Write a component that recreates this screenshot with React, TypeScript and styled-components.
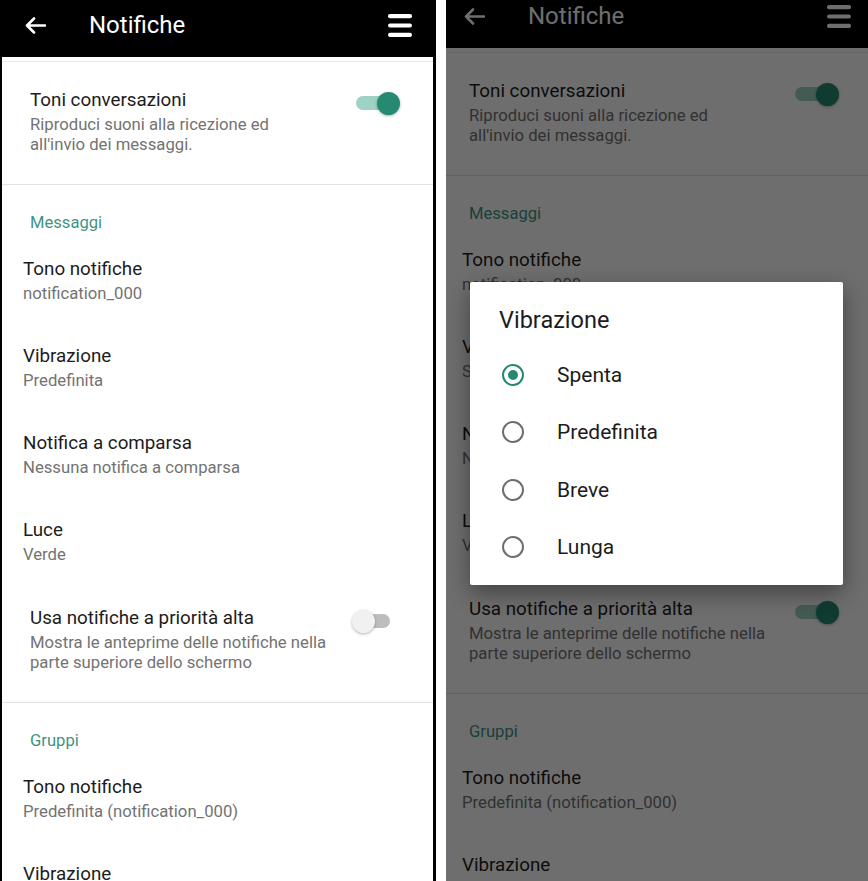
import React from "react";
import styled, { createGlobalStyle } from "styled-components";

const Global = createGlobalStyle`
  html, body { margin: 0; padding: 0; background: #fff; }
  body { font-family: Roboto, "Noto Sans", "Liberation Sans", sans-serif; }
  * { box-sizing: border-box; }
`;

const TEAL = "#268a72";

const Page = styled.div`
  display: flex;
  width: 868px;
  height: 881px;
  overflow: hidden;
  background: #fff;
`;

const FramedPanel = styled.div`
  flex: none;
  width: 436px;
  height: 881px;
  border-left: 2px solid #000;
  border-right: 3px solid #000;
  overflow: hidden;
`;

const CroppedPanel = styled.div`
  flex: none;
  position: relative;
  width: 422px;
  height: 881px;
  margin-left: 10px;
  overflow: hidden;
`;

const ScreenShift = styled.div`
  margin: -9px 0 0 -5px;
`;

const ScreenRoot = styled.div`
  width: 431px;
  background: #fff;
`;

const AppBar = styled.header`
  height: 57px;
  background: #000;
  color: #fff;
  display: flex;
  align-items: center;
  padding: 0 21px 7px 23px;
`;

const BarTitle = styled.h1`
  flex: 1;
  margin: 0 0 0 43px;
  font-size: 24px;
  font-weight: 400;
  line-height: 28px;
`;

const Shade = styled.div`
  height: 5px;
  border-bottom: 1px solid #ececec;
`;

const ToggleRow = styled.div<{ $top: number }>`
  display: flex;
  align-items: flex-start;
  padding: ${(p) => p.$top}px 33px 29px 28px;
`;

const TextCol = styled.div`
  flex: 1;
  min-width: 0;
`;

const ItemTitle = styled.div`
  font-size: 18.8px;
  line-height: 24px;
  color: #1c1c1c;
  white-space: nowrap;
`;

const Summary = styled.div`
  margin-top: 3px;
  font-size: 16.7px;
  line-height: 20px;
  color: #737373;
  white-space: nowrap;
`;

const Divider = styled.div`
  height: 1px;
  background: #e2e2e2;
`;

const SectionHeader = styled.div`
  padding: 28px 0 4px 28px;
  font-size: 16.6px;
  line-height: 20px;
  color: #3f9482;
`;

const Item = styled.div`
  padding: 20px 0 20px 21px;
`;

const SwitchBox = styled.div`
  flex: none;
  position: relative;
  width: 48px;
  height: 24px;
  margin-top: 3px;
`;

const Track = styled.span<{ $on: boolean }>`
  position: absolute;
  left: 4px;
  top: 5px;
  width: 34px;
  height: 14px;
  border-radius: 7px;
  background: ${(p) => (p.$on ? "#9ed2c4" : "#bdbdbd")};
`;

const Thumb = styled.span<{ $on: boolean }>`
  position: absolute;
  top: 0.5px;
  left: ${(p) => (p.$on ? "25px" : "0")};
  width: 23px;
  height: 23px;
  border-radius: 50%;
  background: ${(p) => (p.$on ? TEAL : "#f1f1f1")};
  box-shadow: 0 1px 3px rgba(0, 0, 0, 0.3);
`;

const Dim = styled.div`
  position: absolute;
  inset: 0;
  background: rgba(0, 0, 0, 0.57);
`;

const Dialog = styled.div`
  position: absolute;
  left: 24px;
  top: 282px;
  width: 373px;
  height: 303px;
  background: #fff;
  border-radius: 2px;
  box-shadow: 0 8px 22px rgba(0, 0, 0, 0.4);
  padding-top: 24px;
`;

const DialogTitle = styled.h2`
  margin: 0 0 12px 29px;
  font-size: 23.5px;
  font-weight: 400;
  line-height: 28px;
  color: #1c1c1c;
`;

const Option = styled.div`
  height: 57.5px;
  display: flex;
  align-items: center;
  gap: 33px;
  padding-left: 32px;
  font-size: 21px;
  color: #1c1c1c;
`;

const Radio = styled.span<{ $checked: boolean }>`
  flex: none;
  width: 22px;
  height: 22px;
  border-radius: 50%;
  border: 2px solid ${(p) => (p.$checked ? TEAL : "#6e6e6e")};
  display: flex;
  align-items: center;
  justify-content: center;
  &::after {
    content: "";
    width: 10px;
    height: 10px;
    border-radius: 50%;
    background: ${(p) => (p.$checked ? TEAL : "transparent")};
  }
`;

const BackArrow = () => (
  <svg width="21" height="17" viewBox="0 0 21 17" fill="none">
    <path
      d="M20 8.5H2 M9 1.5L2 8.5L9 15.5"
      stroke="#fff"
      strokeWidth="2.6"
      strokeLinecap="round"
      strokeLinejoin="round"
    />
  </svg>
);

const Hamburger = () => (
  <svg width="24" height="23" viewBox="0 0 24 23">
    <rect x="0" y="0" width="24" height="4.2" rx="2" fill="#fff" />
    <rect x="0" y="9.4" width="24" height="4.2" rx="2" fill="#fff" />
    <rect x="0" y="18.8" width="24" height="4.2" rx="2" fill="#fff" />
  </svg>
);

const Switch = ({ on }: { on: boolean }) => (
  <SwitchBox>
    <Track $on={on} />
    <Thumb $on={on} />
  </SwitchBox>
);

type ScreenProps = { vibration: string; priority: boolean };

const Screen = ({ vibration, priority }: ScreenProps) => (
  <ScreenRoot>
    <AppBar>
      <BackArrow />
      <BarTitle>Notifiche</BarTitle>
      <Hamburger />
    </AppBar>
    <Shade />
    <ToggleRow $top={26}>
      <TextCol>
        <ItemTitle>Toni conversazioni</ItemTitle>
        <Summary>
          Riproduci suoni alla ricezione ed
          <br />
          all'invio dei messaggi.
        </Summary>
      </TextCol>
      <Switch on />
    </ToggleRow>
    <Divider />
    <SectionHeader>Messaggi</SectionHeader>
    <Item>
      <ItemTitle>Tono notifiche</ItemTitle>
      <Summary>notification_000</Summary>
    </Item>
    <Item>
      <ItemTitle>Vibrazione</ItemTitle>
      <Summary>{vibration}</Summary>
    </Item>
    <Item>
      <ItemTitle>Notifica a comparsa</ItemTitle>
      <Summary>Nessuna notifica a comparsa</Summary>
    </Item>
    <Item>
      <ItemTitle>Luce</ItemTitle>
      <Summary>Verde</Summary>
    </Item>
    <ToggleRow $top={21}>
      <TextCol>
        <ItemTitle>Usa notifiche a priorità alta</ItemTitle>
        <Summary>
          Mostra le anteprime delle notifiche nella
          <br />
          parte superiore dello schermo
        </Summary>
      </TextCol>
      <Switch on={priority} />
    </ToggleRow>
    <Divider />
    <SectionHeader>Gruppi</SectionHeader>
    <Item>
      <ItemTitle>Tono notifiche</ItemTitle>
      <Summary>Predefinita (notification_000)</Summary>
    </Item>
    <Item>
      <ItemTitle>Vibrazione</ItemTitle>
      <Summary>Predefinita</Summary>
    </Item>
  </ScreenRoot>
);

const options = ["Spenta", "Predefinita", "Breve", "Lunga"];

export default function App() {
  return (
    <>
      <Global />
      <Page>
        <FramedPanel>
          <Screen vibration="Predefinita" priority={false} />
        </FramedPanel>
        <CroppedPanel>
          <ScreenShift>
            <Screen vibration="Spenta" priority />
          </ScreenShift>
          <Dim />
          <Dialog>
            <DialogTitle>Vibrazione</DialogTitle>
            {options.map((o, i) => (
              <Option key={o}>
                <Radio $checked={i === 0} />
                {o}
              </Option>
            ))}
          </Dialog>
        </CroppedPanel>
      </Page>
    </>
  );
}
